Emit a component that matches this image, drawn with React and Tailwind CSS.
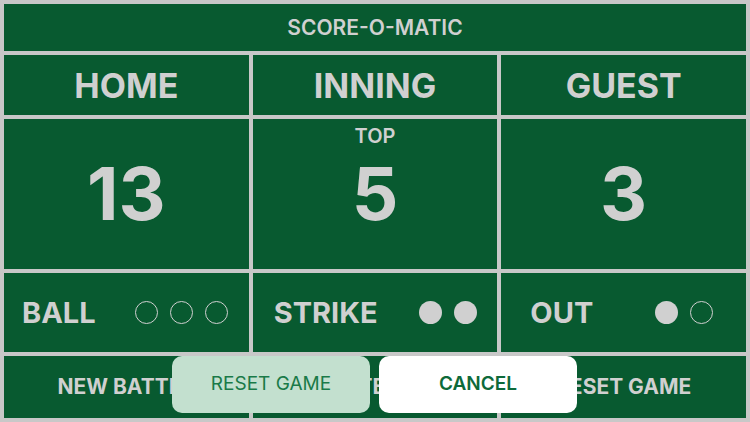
import React from 'react';

const font = { fontFamily: 'Inter, "Liberation Sans", sans-serif' };

function Dots({ total, filled }) {
  return (
    <div className="flex gap-[12px]">
      {Array.from({ length: total }).map((_, i) =>
        i < filled ? (
          <span key={i} className="w-[23px] h-[23px] rounded-full bg-[#d0d0d0]" />
        ) : (
          <span key={i} className="w-[23px] h-[23px] rounded-full border-[1.5px] border-[#d0d0d0]" />
        )
      )}
    </div>
  );
}

function CountCell({ label, total, filled, pad }) {
  return (
    <div className={`bg-[#085a30] flex items-center justify-between ${pad}`}>
      <span className="text-[29px] font-bold">{label}</span>
      <Dots total={total} filled={filled} />
    </div>
  );
}

export default function App() {
  return (
    <div
      style={font}
      className="relative w-[750px] h-[422px] bg-[#c8c8c8] p-[4px] text-[#d0d0d0] overflow-hidden"
    >
      <div className="grid grid-cols-3 grid-rows-[47px_60px_150px_79px_62px] gap-[4px] h-full">
        {/* Title */}
        <div className="col-span-3 bg-[#085a30] flex items-center justify-center text-[21px] font-semibold">
          SCORE-O-MATIC
        </div>

        {/* Headers */}
        <div className="bg-[#085a30] flex items-center justify-center text-[34px] font-bold">HOME</div>
        <div className="bg-[#085a30] flex items-center justify-center text-[34px] font-bold">INNING</div>
        <div className="bg-[#085a30] flex items-center justify-center text-[34px] font-bold">GUEST</div>

        {/* Scores */}
        <div className="bg-[#085a30] flex items-center justify-center text-[73px] font-bold">13</div>
        <div className="relative bg-[#085a30] flex items-center justify-center text-[73px] font-bold">
          <span className="absolute top-[7px] left-0 right-0 text-center text-[20px] leading-none font-semibold">TOP</span>
          5
        </div>
        <div className="bg-[#085a30] flex items-center justify-center text-[73px] font-bold">3</div>

        {/* Counts */}
        <CountCell label="BALL" total={3} filled={0} pad="pl-[18px] pr-[21px]" />
        <CountCell label="STRIKE" total={2} filled={2} pad="pl-[21px] pr-[20px]" />
        <CountCell label="OUT" total={2} filled={1} pad="pl-[29px] pr-[33px]" />

        {/* Actions */}
        <div className="bg-[#085a30] flex items-center justify-center text-[21px] font-bold">NEW BATTER</div>
        <div className="bg-[#085a30] flex items-center justify-center text-[21px] font-bold">BATTER UP</div>
        <div className="bg-[#085a30] flex items-center justify-center text-[21px] font-bold">RESET GAME</div>
      </div>

      {/* Confirmation sheet */}
      <div className="absolute bottom-[9px] left-[172px] flex gap-[9px]">
        <button className="w-[198px] h-[57px] rounded-[10px] bg-[#c3e0cf] text-[#1a7a48] text-[19px]">
          RESET GAME
        </button>
        <button className="w-[198px] h-[57px] rounded-[10px] bg-white text-[#0d6a3a] text-[19px] font-semibold">
          CANCEL
        </button>
      </div>
    </div>
  );
}
